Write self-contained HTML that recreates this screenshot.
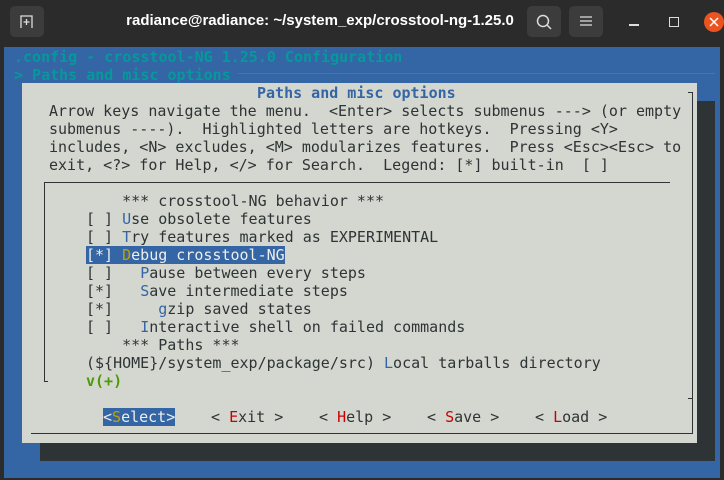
<!DOCTYPE html>
<html><head><meta charset="utf-8"><style>
*{margin:0;padding:0;box-sizing:border-box}
body{width:724px;height:480px;background:#2b2b2b;position:relative;overflow:hidden;font-family:"DejaVu Sans Mono","Liberation Mono",monospace;font-size:15px}
.t{position:absolute;white-space:pre;line-height:18px;height:18px;margin-top:1px}
.term{position:absolute;left:4px;top:47px;width:716px;height:431px;background:#3465a4}
.dlg{position:absolute;left:22px;top:83px;width:675px;height:360px;background:#d3d7cf}
.sh{position:absolute;left:40px;top:101px;width:675px;height:360px;background:#2e3436}
.d{color:#2e3436}
.b{color:#3465a4}
.hl{background:#3465a4;color:#eeeeec}
.y{color:#c4a000}
.r{color:#cc0000}
.g{color:#4e9a06;font-weight:bold}
.c{color:#06989a;font-weight:bold}
.btn{position:absolute;top:6px;width:34px;height:31px;background:#3c3c3c;border-radius:5px}
</style></head><body>
<div class="btn" style="left:10px"></div>
<svg style="position:absolute;left:19px;top:14px" width="16" height="15" viewBox="0 0 16 15"><path d="M2 14V2h11v12" fill="none" stroke="#ddd" stroke-width="1.3"/><path d="M7.5 5v6M4.5 8h6" stroke="#ddd" stroke-width="1.3"/></svg>
<div style="position:absolute;left:0;width:640px;top:12px;text-align:center;color:#fff;font:bold 15px 'Liberation Sans',sans-serif">radiance@radiance: ~/system_exp/crosstool-ng-1.25.0</div>
<div class="btn" style="left:527px"></div>
<svg style="position:absolute;left:535px;top:13px" width="18" height="18"><circle cx="8" cy="8" r="5.5" fill="none" stroke="#ddd" stroke-width="1.5"/><path d="M12 12l4 4" stroke="#ddd" stroke-width="1.5"/></svg>
<div class="btn" style="left:569px"></div>
<svg style="position:absolute;left:579px;top:15px" width="14" height="12"><path d="M1 2h12M1 6h12M1 10h12" stroke="#ddd" stroke-width="1.2"/></svg>
<div style="position:absolute;left:629px;top:24px;width:10px;height:1.5px;background:#ddd"></div>
<div style="position:absolute;left:669px;top:17px;width:10px;height:10px;border:1.5px solid #ddd"></div>
<div style="position:absolute;left:704px;top:12px;width:20px;height:20px;border-radius:50%;background:#e95420"></div>
<svg style="position:absolute;left:709px;top:17px" width="10" height="10"><path d="M1 1l8 8M9 1l-8 8" stroke="#fff" stroke-width="1.5"/></svg>

<div class="term"></div>
<div class="t c" style="left:14px;top:47px">.config - crosstool-NG 1.25.0 Configuration</div>
<div class="t c" style="left:14px;top:65px">&gt; Paths and misc options</div>
<div style="position:absolute;left:238px;top:73px;width:477px;height:1px;background:#06989a"></div>
<div class="sh"></div>
<div class="dlg"></div>
<div style="position:absolute;left:692px;top:92px;width:1px;height:342px;background:#2e3436"></div>
<div style="position:absolute;left:688px;top:92px;width:5px;height:1px;background:#2e3436"></div>
<div style="position:absolute;left:31px;top:433px;width:662px;height:1px;background:#2e3436"></div>
<div style="position:absolute;left:688px;top:398px;width:5px;height:1px;background:#2e3436"></div>
<div style="position:absolute;left:44px;top:182px;width:626px;height:1px;background:#2e3436"></div>
<div style="position:absolute;left:44px;top:182px;width:1px;height:200px;background:#2e3436"></div>
<div style="position:absolute;left:44px;top:381px;width:4px;height:1px;background:#2e3436"></div>

<div class="t b" style="left:257px;top:83px;font-weight:bold">Paths and misc options</div>
<div class="t d" style="left:49px;top:101px">Arrow keys navigate the menu.  &lt;Enter&gt; selects submenus ---&gt; (or empty</div>
<div class="t d" style="left:49px;top:119px">submenus ----).  Highlighted letters are hotkeys.  Pressing &lt;Y&gt;</div>
<div class="t d" style="left:49px;top:137px">includes, &lt;N&gt; excludes, &lt;M&gt; modularizes features.  Press &lt;Esc&gt;&lt;Esc&gt; to</div>
<div class="t d" style="left:49px;top:155px">exit, &lt;?&gt; for Help, &lt;/&gt; for Search.  Legend: [*] built-in  [ ]</div>

<div class="t d" style="left:86px;top:191px">    *** crosstool-NG behavior ***</div>
<div class="t d" style="left:86px;top:209px">[ ] <span class="b">U</span>se obsolete features</div>
<div class="t d" style="left:86px;top:227px">[ ] <span class="b">T</span>ry features marked as EXPERIMENTAL</div>
<div class="t hl" style="left:86px;top:245px">[*] <span class="y">D</span>ebug crosstool-NG</div>
<div class="t d" style="left:86px;top:263px">[ ]   <span class="b">P</span>ause between every steps</div>
<div class="t d" style="left:86px;top:281px">[*]   <span class="b">S</span>ave intermediate steps</div>
<div class="t d" style="left:86px;top:299px">[*]     <span class="b">g</span>zip saved states</div>
<div class="t d" style="left:86px;top:317px">[ ]   <span class="b">I</span>nteractive shell on failed commands</div>
<div class="t d" style="left:86px;top:335px">    *** Paths ***</div>
<div class="t d" style="left:86px;top:353px">(${HOME}/system_exp/package/src) <span class="b">L</span>ocal tarballs directory</div>
<div class="t g" style="left:86px;top:371px">v(+)</div>

<div class="t hl" style="left:103px;top:407px">&lt;<span class="y">S</span>elect&gt;</div>
<div class="t d" style="left:211px;top:407px">&lt; <span class="r">E</span>xit &gt;</div>
<div class="t d" style="left:319px;top:407px">&lt; <span class="r">H</span>elp &gt;</div>
<div class="t d" style="left:427px;top:407px">&lt; <span class="r">S</span>ave &gt;</div>
<div class="t d" style="left:535px;top:407px">&lt; <span class="r">L</span>oad &gt;</div>
</body></html>
